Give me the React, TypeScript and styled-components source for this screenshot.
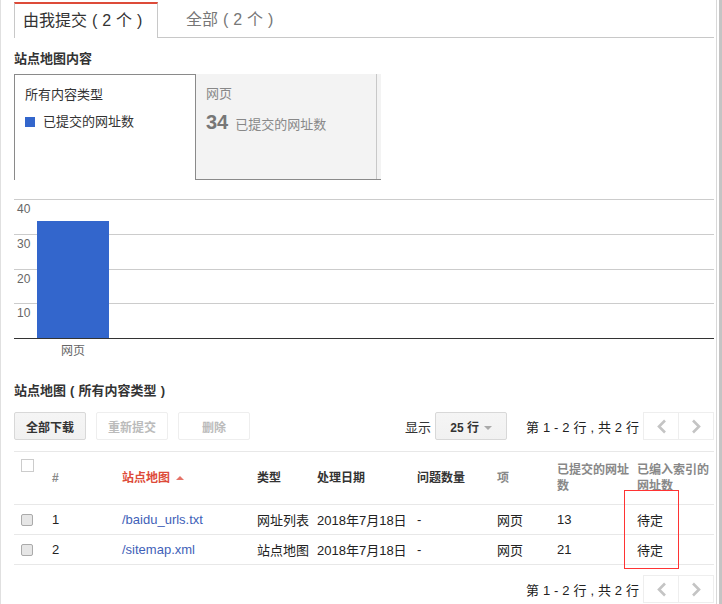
import React from 'react';
import styled, { createGlobalStyle } from 'styled-components';

const GlobalStyle = createGlobalStyle`
  html, body { margin: 0; padding: 0; background: #fff; }
  body { font-family: "Liberation Sans", "Noto Sans CJK SC", Arial, sans-serif; font-size: 13px; color: #222; }
`;

const Page = styled.div`
  position: relative;
  width: 722px;
  height: 604px;
  overflow: hidden;
  box-sizing: border-box;
  padding: 2px 8px 0 13px;
  border-left: 1px solid #e0e0e0;
`;

// window edge on the right of the capture
const ScrollEdge = styled.div`
  position: absolute;
  top: 0;
  right: 0;
  bottom: 0;
  width: 3px;
  background: #c4c4c4;
  box-shadow: -2px 0 0 #fff, -3px 0 0 #d8d8d8;
`;

const Tabs = styled.div`
  display: flex;
  height: 35px;
  border-bottom: 1px solid #c8c8c8;
`;

const Tab = styled.div<{ $active?: boolean }>`
  box-sizing: border-box;
  width: ${(p) => (p.$active ? '144px' : 'auto')};
  height: ${(p) => (p.$active ? '36px' : '35px')};
  padding: ${(p) => (p.$active ? '0 0 0 8px' : '0 0 0 28px')};
  line-height: ${(p) => (p.$active ? '34px' : '36px')};
  font-size: 16px;
  word-spacing: 0.5px;
  color: ${(p) => (p.$active ? '#333' : '#777')};
  background: #fff;
  border-top: ${(p) => (p.$active ? '2px solid #dd4b39' : 'none')};
  border-left: ${(p) => (p.$active ? '1px solid #c8c8c8' : 'none')};
  border-right: ${(p) => (p.$active ? '1px solid #c8c8c8' : 'none')};
  margin-bottom: ${(p) => (p.$active ? '-1px' : '0')};
`;

const SectionTitle = styled.h3<{ $top: number }>`
  margin: ${(p) => p.$top}px 0 0;
  font-size: 13px;
  line-height: 18px;
  font-weight: bold;
  word-spacing: 0.5px;
  color: #333;
`;

const Metrics = styled.div`
  display: flex;
  margin-top: 6px;
  height: 106px;
`;

const LegendCard = styled.div`
  box-sizing: border-box;
  width: 182px;
  padding: 11px 10px;
  border: 1px solid #8a8a8a;
  border-bottom: none;
`;

const LegendTitle = styled.div`
  line-height: 18px;
  color: #333;
`;

const LegendRow = styled.div`
  display: flex;
  align-items: center;
  gap: 8px;
  margin-top: 9px;
  line-height: 18px;
  color: #333;
`;

const Swatch = styled.span`
  width: 10px;
  height: 10px;
  background: #3366cc;
`;

const MetricCard = styled.div`
  box-sizing: border-box;
  width: 185px;
  padding: 12px 10px;
  background: #f3f3f3;
  border-bottom: 1px solid #8a8a8a;
  box-shadow: inset -4px 0 0 #f3f3f3, inset -5px 0 0 #c8c8c8;
  color: #888;
`;

const MetricName = styled.div`
  line-height: 16px;
`;

const MetricValue = styled.div`
  display: flex;
  align-items: baseline;
  gap: 7px;
  margin-top: 8px;
  line-height: 24px;
  strong { font-size: 20px; color: #777; }
`;

const Chart = styled.div`
  margin-top: 19px;
  height: 159px;
`;

const ChartPlot = styled.div`
  position: relative;
  height: 139px;
  border-bottom: 1px solid #333;
  display: flex;
  flex-direction: column;
`;

const GridBand = styled.div`
  flex: 1;
  border-top: 1px solid #ccc;
  font-size: 12px;
  line-height: 19px;
  color: #666;
  padding-left: 3px;
`;

const Bar = styled.div`
  position: absolute;
  left: 23px;
  bottom: 0;
  width: 72px;
  height: 117px;
  background: #3366cc;
`;

const AxisLabel = styled.div`
  width: 72px;
  margin-left: 23px;
  padding-top: 5px;
  text-align: center;
  font-size: 12px;
  line-height: 14px;
  color: #666;
`;

const Toolbar = styled.div`
  display: flex;
  align-items: center;
  margin-top: 12px;
  height: 28px;
`;

const Button = styled.button<{ $disabled?: boolean }>`
  box-sizing: border-box;
  width: 72px;
  height: 28px;
  padding: 0;
  margin-right: 10px;
  font: bold 12px "Liberation Sans", "Noto Sans CJK SC", sans-serif;
  border-radius: 2px;
  color: ${(p) => (p.$disabled ? '#bbb' : '#333')};
  background: ${(p) => (p.$disabled ? '#fff' : 'linear-gradient(#f5f5f5, #f1f1f1)')};
  border: 1px solid ${(p) => (p.$disabled ? '#eee' : '#d8d8d8')};
`;

const SelectButton = styled(Button)`
  margin-right: 0;
`;

const Spacer = styled.div`
  flex: 1;
`;

const ShowLabel = styled.span`
  margin-right: 4px;
  color: #333;
`;

const Caret = styled.span`
  display: inline-block;
  margin-left: 5px;
  vertical-align: 2px;
  border: 4px solid transparent;
  border-top: 4px solid #aaa;
  border-bottom: none;
`;

const PageText = styled.span`
  margin: 0 5px 0 19px;
  word-spacing: 0.3px;
  color: #222;
`;

const Pager = styled.div`
  display: flex;
`;

const PagerButton = styled.div`
  box-sizing: border-box;
  width: 36px;
  height: 28px;
  display: flex;
  align-items: center;
  justify-content: center;
  border: 1px solid #eee;
  margin-left: -1px;
  svg { display: block; }
`;

const Table = styled.div`
  margin-top: 11px;
  border-top: 1px solid #e8e8e8;
  display: grid;
  grid-template-columns: 38px 70px 135px 60px 100px 80px 60px 80px 1fr;
`;

const HeadCell = styled.div<{ $muted?: boolean; $red?: boolean }>`
  height: 52px;
  display: flex;
  align-items: center;
  border-bottom: 1px solid #e8e8e8;
  font-weight: bold;
  font-size: 12px;
  line-height: 16px;
  color: ${(p) => (p.$red ? '#dd4b39' : p.$muted ? '#888' : '#333')};
`;

const Cell = styled.div`
  height: 29px;
  display: flex;
  align-items: center;
  border-bottom: 1px solid #e8e8e8;
  white-space: nowrap;
  color: #222;
`;

const CheckCell = styled(Cell)`
  padding-left: 7px;
`;

const HeadCheckCell = styled(HeadCell)`
  padding-left: 7px;
  align-items: flex-start;
  padding-top: 7px;
  height: 45px;
`;

const Checkbox = styled.span<{ $head?: boolean }>`
  box-sizing: border-box;
  display: block;
  width: ${(p) => (p.$head ? 13 : 12)}px;
  height: ${(p) => (p.$head ? 13 : 12)}px;
  border: 1px solid ${(p) => (p.$head ? '#ccc' : '#aaa')};
  border-radius: ${(p) => (p.$head ? 0 : 2)}px;
  background: ${(p) => (p.$head ? '#fff' : '#e6e6e6')};
`;

const SitemapLink = styled.a`
  color: #3f5fb8;
  text-decoration: none;
`;

const SortArrow = styled.span`
  margin-left: 6px;
  border: 4px solid transparent;
  border-bottom: 4px solid #e57368;
  border-top: none;
`;

const BottomPager = styled.div`
  display: flex;
  justify-content: flex-end;
  align-items: center;
  margin-top: 10px;
  height: 28px;
`;

const Highlight = styled.div`
  position: absolute;
  left: 623px;
  top: 490px;
  width: 53px;
  height: 77px;
  border: 1px solid #ff3333;
`;

const Chevron = ({ dir }: { dir: 'left' | 'right' }) => (
  <svg width="11" height="15" viewBox="0 0 11 15" fill="none" stroke="#c4c4c4" strokeWidth="2.6">
    <path d={dir === 'left' ? 'M9 1.5 L3 7.5 L9 13.5' : 'M2 1.5 L8 7.5 L2 13.5'} />
  </svg>
);

const PagerButtons = () => (
  <Pager>
    <PagerButton><Chevron dir="left" /></PagerButton>
    <PagerButton><Chevron dir="right" /></PagerButton>
  </Pager>
);

const rows = [
  { id: 1, path: '/baidu_urls.txt', type: '网址列表', count: 13 },
  { id: 2, path: '/sitemap.xml', type: '站点地图', count: 21 },
];

export default function App() {
  return (
    <Page>
      <GlobalStyle />
      <Tabs>
        <Tab $active>由我提交 ( 2 个 )</Tab>
        <Tab>全部 ( 2 个 )</Tab>
      </Tabs>

      <SectionTitle $top={12}>站点地图内容</SectionTitle>
      <Metrics>
        <LegendCard>
          <LegendTitle>所有内容类型</LegendTitle>
          <LegendRow><Swatch />已提交的网址数</LegendRow>
        </LegendCard>
        <MetricCard>
          <MetricName>网页</MetricName>
          <MetricValue><strong>34</strong>已提交的网址数</MetricValue>
        </MetricCard>
      </Metrics>

      <Chart>
        <ChartPlot>
          <GridBand>40</GridBand>
          <GridBand>30</GridBand>
          <GridBand>20</GridBand>
          <GridBand>10</GridBand>
          <Bar />
        </ChartPlot>
        <AxisLabel>网页</AxisLabel>
      </Chart>

      <SectionTitle $top={24}>站点地图 ( 所有内容类型 )</SectionTitle>
      <Toolbar>
        <Button>全部下载</Button>
        <Button $disabled>重新提交</Button>
        <Button $disabled>删除</Button>
        <Spacer />
        <ShowLabel>显示</ShowLabel>
        <SelectButton>25 行<Caret /></SelectButton>
        <PageText>第 1 - 2 行 , 共 2 行</PageText>
        <PagerButtons />
      </Toolbar>

      <Table>
        <HeadCheckCell><Checkbox $head /></HeadCheckCell>
        <HeadCell $muted>#</HeadCell>
        <HeadCell $red>站点地图<SortArrow /></HeadCell>
        <HeadCell>类型</HeadCell>
        <HeadCell>处理日期</HeadCell>
        <HeadCell>问题数量</HeadCell>
        <HeadCell $muted>项</HeadCell>
        <HeadCell $muted>已提交的网址数</HeadCell>
        <HeadCell $muted>已编入索引的网址数</HeadCell>
        {rows.map((r) => (
          <React.Fragment key={r.id}>
            <CheckCell><Checkbox /></CheckCell>
            <Cell>{r.id}</Cell>
            <Cell><SitemapLink>{r.path}</SitemapLink></Cell>
            <Cell>{r.type}</Cell>
            <Cell>2018年7月18日</Cell>
            <Cell>-</Cell>
            <Cell>网页</Cell>
            <Cell>{r.count}</Cell>
            <Cell>待定</Cell>
          </React.Fragment>
        ))}
      </Table>

      <BottomPager>
        <PageText>第 1 - 2 行 , 共 2 行</PageText>
        <PagerButtons />
      </BottomPager>

      <Highlight />
      <ScrollEdge />
    </Page>
  );
}
